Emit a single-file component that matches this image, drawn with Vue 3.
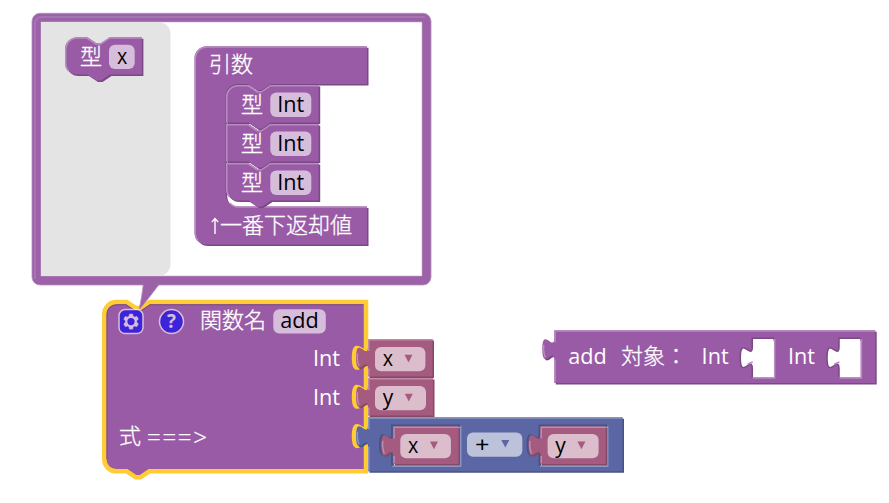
<script setup>
const S = 1.5
const R = 8 * S
const palette = {
  purple: { fill: '#995ba5', light: '#b88cc0', dark: '#7a4984' },
  pink: { fill: '#a55b80', light: '#c08ca6', dark: '#844966' },
  blue: { fill: '#5b67a5', light: '#8c95c0', dark: '#495284' },
}
const notchRight = 'l 9,6 4.5,0 9,-6'
const notchLeft = 'l -9,6 -4.5,0 -9,-6'
const tabDown = 'c 0,15 -12,-12 -12,11.25 s 12,-3.75 12,11.25'
const tabUp = 'c 0,-15 -12,12 -12,-11.25 s 12,3.75 12,-11.25'

// Stackable statement; a corner is square where another block is attached
function stack(x, y, w, h, roundTop = true, roundBottom = true) {
  const o = 0.75
  const top = roundTop ? `M ${x},${y + R} a ${R},${R} 0 0 1 ${R},${-R}` : `M ${x},${y}`
  const bottom = roundBottom ? `H ${x + R} a ${R},${R} 0 0 1 ${-R},${-R}` : `H ${x}`
  const shineStart = roundBottom
    ? `M ${x + 3.5},${y + h - 3.5} A ${R},${R} 0 0 1 ${x + o},${y + h - R}`
    : `M ${x + o},${y + h}`
  const shineTop = roundTop
    ? `V ${y + R} A ${R - o},${R - o} 0 0 1 ${x + R},${y + o}`
    : `V ${y + o}`
  return {
    color: 'purple',
    body: `${top} H ${x + 22.5} ${notchRight} H ${x + w} v ${h} H ${x + 45} ${notchLeft} ${bottom} z`,
    shine: `${shineStart} ${shineTop} H ${x + 22} ${notchRight} H ${x + w}`,
  }
}

// Value block with a puzzle tab on its left side
function value(color, x, y, w, h, holes = []) {
  const o = 0.75
  let body = `M ${x},${y} H ${x + w} v ${h} H ${x} V ${y + 30} ${tabUp} z`
  for (const [hx, hy, hw, hh] of holes) {
    body += ` M ${hx},${hy} v 7.5 ${tabDown} V ${hy + hh} h ${hw} v ${-hh} z`
  }
  return {
    color,
    body,
    shine: `M ${x + o},${y + h - o} V ${y + 29.5} M ${x - 9},${y + 27} q -2.6,-7 -1.4,-12.5 M ${x + o},${y + 12} V ${y + o} H ${x + w}`,
    holes: holes.map(([hx, hy, hw, hh]) => ({
      dark: `M ${hx + hw},${hy - 0.7} H ${hx - 0.7} v 8.2 ${tabDown} V ${hy + hh}`,
      light: `M ${hx},${hy + hh + 0.7} H ${hx + hw + 0.7} V ${hy} M ${hx - 5.5},${hy + 25.3} l 5.2,-2.3`,
    })),
  }
}

const container = {
  color: 'purple',
  body: `M 194.5,58.3 a 12,12 0 0 1 12,-12 H 367 V 84 H 270.7 ${notchLeft} H 237.7 a 12,12 0 0 0 -12,12 V 194.5 a 12,12 0 0 0 12,12 H 367 V 244.5 H 206.5 a 12,12 0 0 1 -12,-12 z`,
  shine: 'M 198,241 A 12,12 0 0 1 195.25,232.5 V 58.3 A 11.25,11.25 0 0 1 206.5,47.05 H 367 M 229.7,203 A 12,12 0 0 0 238.2,207 H 367',
}

const toolboxBlocks = [
  stack(65, 37.3, 76.9, 37.2),
  container,
  stack(226, 85, 92.7, 37.5, true, false),
  stack(226, 124, 92.7, 37.5, false, false),
  stack(226, 163, 92.7, 37.5, false, true),
]

const selected = `M 104.3,314 a 12,12 0 0 1 12,-12 H 126.8 ${notchRight} H 366 V 346.5 ${tabDown} V 385.5 ${tabDown} V 424.8 ${tabDown} V 471.3 H 149.3 ${notchLeft} H 116.3 a 12,12 0 0 1 -12,-12 z`

const valueBlocks = [
  value('pink', 368, 339, 64.5, 37.5),
  value('pink', 368, 378, 65, 37.5),
  value('blue', 368, 417.3, 254.5, 54, [[392.5, 426, 67.5, 39.5], [540, 426, 67, 39.5]]),
  value('pink', 393.3, 426.5, 65.2, 37.5),
  value('pink', 540.5, 426.5, 65.2, 37.5),
  value('purple', 554.3, 330.3, 320.9, 52.7, [[753, 339, 21, 38.3], [839.7, 339, 21, 38.3]]),
]

const fields = [
  { x: 109, y: 44.7, w: 25.7 },
  { x: 270.3, y: 92.6, w: 41 },
  { x: 270.3, y: 131.6, w: 41 },
  { x: 270.3, y: 170.6, w: 41 },
  { x: 273.3, y: 309.3, w: 52.5 },
  { x: 375, y: 347, w: 50.4, arrow: [408.5, 354.8], color: 'pink' },
  { x: 375, y: 386, w: 51, arrow: [408.8, 393.8], color: 'pink' },
  { x: 400.3, y: 434, w: 50.6, arrow: [434, 441.6], color: 'pink' },
  { x: 467, y: 432.4, w: 55.3, arrow: [505.3, 440], color: 'blue' },
  { x: 547.6, y: 434, w: 51, arrow: [581.4, 441.6], color: 'pink' },
]

const labels = [
  { t: '型', x: 80, y: 64, w: 22, cjk: true },
  { t: '引数', x: 209, y: 72, w: 44, cjk: true },
  { t: '型', x: 241, y: 112, w: 22, cjk: true },
  { t: '型', x: 241, y: 151, w: 22, cjk: true },
  { t: '型', x: 241, y: 190, w: 22, cjk: true },
  { t: '一番下返却値', x: 220, y: 232.5, w: 132, cjk: true },
  { t: '関数名', x: 200, y: 327.5, w: 66, cjk: true },
  { t: 'Int', x: 313, y: 366, w: 27 },
  { t: 'Int', x: 313, y: 405, w: 27 },
  { t: '式', x: 119, y: 443.5, w: 22, cjk: true },
  { t: '===>', x: 147, y: 446, w: 60, thin: true },
  { t: 'add', x: 568.3, y: 364, w: 38.5 },
  { t: '対象：', x: 621, y: 364, w: 66, cjk: true },
  { t: 'Int', x: 701.6, y: 364, w: 27 },
  { t: 'Int', x: 788, y: 364, w: 27 },
  { t: 'x', x: 117, y: 64.3, w: 10.3, ink: true },
  { t: 'Int', x: 277.3, y: 112, w: 27, ink: true },
  { t: 'Int', x: 277.3, y: 151, w: 27, ink: true },
  { t: 'Int', x: 277.3, y: 190, w: 27, ink: true },
  { t: 'add', x: 280.3, y: 327.8, w: 38.5, ink: true },
  { t: 'x', x: 382.8, y: 366, w: 10.3, ink: true },
  { t: 'y', x: 382.8, y: 405, w: 10.5, ink: true },
  { t: 'x', x: 408, y: 453, w: 10.3, ink: true },
  { t: '+', x: 475, y: 452, w: 14.5, ink: true },
  { t: 'y', x: 555.3, y: 453, w: 10.5, ink: true },
]
</script>

<template>
  <svg class="workspace" width="889" height="503" viewBox="0 0 889 503">
    <g class="selected">
      <path :d="selected" />
      <path class="selected-edge" d="M 107,459 V 315 A 9.5,9.5 0 0 1 116.3,304.8 H 126 l 9,6 h 6 l 9,-6 H 363.5" />
    </g>

    <g class="bubble">
      <path class="bubble-frame" d="M 40,13.3 H 423 a 8,8 0 0 1 8,8 V 277 a 8,8 0 0 1 -8,8 H 158.7 Q 149,298 139,310 Q 142,296 143.2,285 H 40 a 8,8 0 0 1 -8,-8 V 21.3 a 8,8 0 0 1 8,-8 z" />
      <path class="bubble-inner-edge" d="M 35,279 V 23 a 6,6 0 0 1 6,-6 H 425" />
      <rect class="bubble-space" x="41" y="22" width="381" height="254" />
      <path class="flyout" d="M 41,22 H 158.5 a 12,12 0 0 1 12,12 V 264 a 12,12 0 0 1 -12,12 H 41 z" />
    </g>

    <g v-for="(b, i) in [...toolboxBlocks, ...valueBlocks]" :key="i">
      <path :d="b.body" :fill="palette[b.color].dark" fill-rule="evenodd" transform="translate(1.5 1.5)" />
      <path :d="b.body" :fill="palette[b.color].fill" fill-rule="evenodd" />
      <path class="line" :d="b.shine" :stroke="palette[b.color].light" />
      <template v-for="(h, j) in b.holes || []" :key="j">
        <path v-if="b.color === 'purple'" class="hole" :d="h.dark + ' h 21 v -38.3 z'" />
        <path class="line" :d="h.dark" :stroke="palette[b.color].dark" />
        <path class="line" :d="h.light" :stroke="palette[b.color].light" />
      </template>
    </g>

    <g v-for="(f, i) in fields" :key="'f' + i">
      <rect class="field" :x="f.x" :y="f.y" :width="f.w" height="24.3" rx="6" />
      <path v-if="f.arrow" :fill="palette[f.color].fill" :d="`M ${f.arrow[0] - 4},${f.arrow[1]} h 8 l -4,7.6 z`" />
    </g>

    <g class="icon" transform="translate(119 309.6) scale(1.5)">
      <rect class="icon-shape" width="16" height="16" rx="4" />
      <path class="icon-symbol" d="m4.203,7.296 0,1.368 -0.92,0.677 -0.11,0.41 0.9,1.559 0.41,0.11 1.043,-0.457 1.187,0.683 0.127,1.134 0.3,0.3 1.8,0 0.3,-0.299 0.127,-1.138 1.185,-0.682 1.046,0.458 0.409,-0.11 0.9,-1.559 -0.11,-0.41 -0.92,-0.677 0,-1.366 0.92,-0.677 0.11,-0.41 -0.9,-1.559 -0.409,-0.109 -1.046,0.458 -1.185,-0.682 -0.127,-1.138 -0.3,-0.299 -1.8,0 -0.3,0.3 -0.126,1.135 -1.187,0.682 -1.043,-0.457 -0.41,0.11 -0.899,1.559 0.108,0.409z" />
      <circle class="icon-hub" cx="8" cy="8" r="2.4" />
    </g>
    <g class="icon" transform="translate(159.5 309.6) scale(1.5)">
      <circle class="icon-shape" cx="8" cy="8" r="8" />
      <text class="icon-mark" x="8" y="12.5" text-anchor="middle">?</text>
    </g>

    <path class="arrow-up" d="M 215,234 V 218.5 M 211.8,222.1 L 215,218.5 L 218.2,222.1" />
    <text
      v-for="(l, i) in labels"
      :key="'t' + i"
      :class="['label', { cjk: l.cjk, ink: l.ink, thin: l.thin }]"
      :x="l.x"
      :y="l.y"
      :textLength="l.w"
      :lengthAdjust="l.thin ? 'spacing' : 'spacingAndGlyphs'"
    >{{ l.t }}</text>
  </svg>
</template>

<style>
body { background: #fff; }
</style>

<style scoped>
.workspace { display: block; }
.selected { fill: #995ba5; stroke: #fc3; stroke-width: 4.5; }
.selected .selected-edge { fill: none; stroke: #7a4984; stroke-width: 1; }
.bubble-frame { fill: #9c62a8; stroke: #b88cc0; stroke-width: 0.8; }
.bubble-inner-edge { fill: none; stroke: #a873b3; stroke-width: 2; }
.bubble-space { fill: #fff; stroke: #c9a8cf; stroke-width: 0.6; }
.flyout { fill: #e4e4e4; }
.line { fill: none; stroke-width: 1.5; }
.hole { fill: #fff; }
.field { fill: #fff; fill-opacity: 0.6; }
.icon { opacity: 0.6; }
.icon-shape { fill: #00f; stroke: #fff; stroke-width: 1; }
.icon-symbol { fill: #fff; stroke: #fff; stroke-width: 0.25; }
.icon-hub { fill: #00f; }
.icon-mark { fill: #fff; font: bold 12.5px "Open Sans", sans-serif; }
.arrow-up { fill: none; stroke: #fff; stroke-width: 1.4; }
.label { fill: #fff; font: 400 21px "Open Sans", sans-serif; }
.label.cjk { font: 300 22px "Noto Sans CJK JP", sans-serif; stroke: #fff; stroke-width: 0.3; }
.label.ink { fill: #000; }
.label.thin { font: 300 24px "Open Sans", sans-serif; stroke: #fff; stroke-width: 0.3; }
</style>
